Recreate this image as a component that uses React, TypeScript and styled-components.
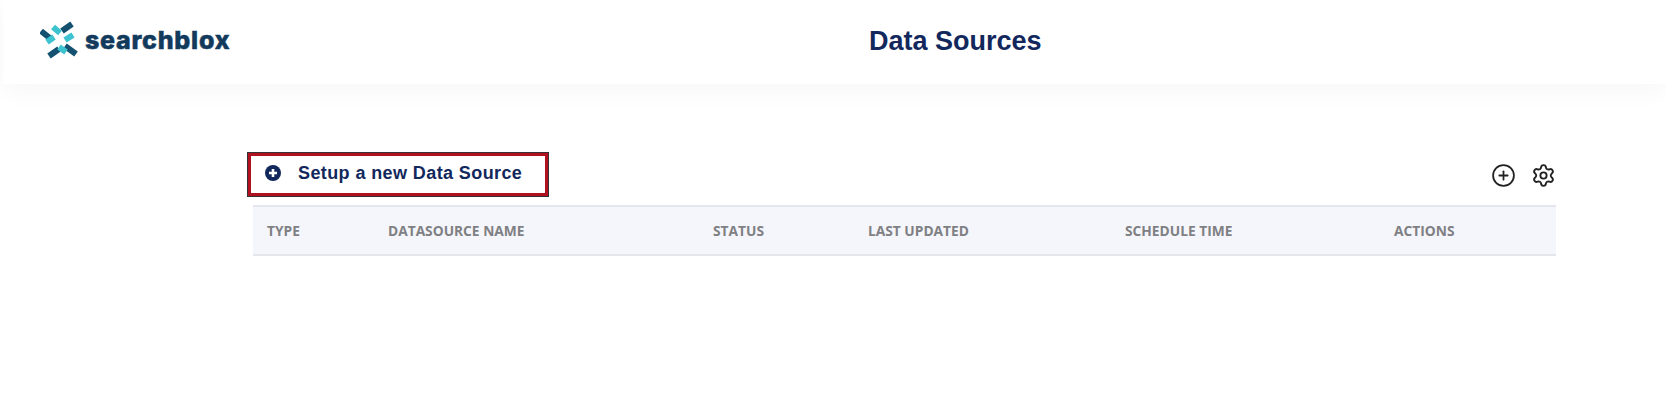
import React from 'react'
import styled, { createGlobalStyle } from 'styled-components'
import { CirclePlus, Settings } from 'lucide-react'

const GlobalStyle = createGlobalStyle`
  html, body {
    margin: 0;
    padding: 0;
    background: #fff;
  }
`

const Page = styled.div`
  width: 1666px;
  height: 409px;
  overflow: hidden;
  background: #fff;
`

const Header = styled.header`
  display: grid;
  grid-template-columns: 869px 1fr;
  align-items: center;
  height: 84px;
  padding-left: 40px;
  margin-left: 3px;
  background: #fff;
  box-shadow: 0 6px 24px rgba(0, 0, 0, 0.04);
`

const Brand = styled.div`
  display: flex;
  align-items: center;
  gap: 5px;
  margin-left: -3px;
  margin-top: -4px;
`

const BrandName = styled.span`
  font-family: Inter, sans-serif;
  font-size: 25px;
  font-weight: 800;
  letter-spacing: 0.75px;
  color: #123a5c;
  -webkit-text-stroke: 0.5px #123a5c;
`

const Title = styled.h1`
  margin: -2px 0 0 -43px;
  font-family: 'Liberation Sans', Arial, sans-serif;
  font-size: 27px;
  font-weight: 700;
  color: #12285c;
`

const Content = styled.main`
  padding: 69px 110px 0 253px;
`

const Toolbar = styled.div`
  display: flex;
  justify-content: space-between;
  align-items: center;
  height: 43px;
  margin-bottom: 9px;
`

const SetupBox = styled.div`
  display: flex;
  align-items: center;
  gap: 16px;
  width: 300px;
  height: 43px;
  box-sizing: border-box;
  margin-left: -5px;
  padding: 0 0 3px 14px;
  background: #fff;
  border: 3px solid #b0101f;
  outline: 1px solid #333;
`

const SetupDot = styled.svg`
  width: 16px;
  height: 16px;
  flex: none;
  margin-right: 1px;
`

const SetupLabel = styled.span`
  font-family: 'Liberation Sans', Arial, sans-serif;
  font-size: 18px;
  font-weight: 700;
  letter-spacing: 0.4px;
  color: #12285c;
`

const ToolIcons = styled.div`
  display: flex;
  align-items: center;
  gap: 15px;
  margin-top: 2px;
  color: #222;
`

const TableHead = styled.div`
  display: grid;
  grid-template-columns: 121px 325px 155px 257px 269px 1fr;
  align-items: center;
  height: 47px;
  padding-left: 14px;
  background: #f5f6fb;
  border-top: 2px solid #e4e6ec;
  border-bottom: 2px solid #e4e6ec;
`

const HeadCell = styled.div`
  font-family: 'Open Sans', sans-serif;
  font-size: 13.75px;
  font-weight: 700;
  color: #7f8084;
  margin-top: -1px;
`

const columns = ['TYPE', 'DATASOURCE NAME', 'STATUS', 'LAST UPDATED', 'SCHEDULE TIME', 'ACTIONS']

function LogoMark() {
  return (
    <svg width="40" height="38" viewBox="0 0 40 38">
      <g strokeWidth="6" fill="none">
        <path d="M1 10 L11 18" stroke="#14506f" />
        <path d="M22 10 L32 3" stroke="#14506f" />
        <path d="M25 25 L36 33" stroke="#14506f" />
        <path d="M9 35 L19 28" stroke="#14506f" />
        <path d="M13 6 L20 12" stroke="#3cc3cf" />
        <path d="M7 21 L14 16" stroke="#3cc3cf" />
        <path d="M25 19 L33 14" stroke="#3cc3cf" />
        <path d="M19 26 L26 31" stroke="#3cc3cf" />
      </g>
    </svg>
  )
}

export default function App() {
  return (
    <Page>
      <GlobalStyle />
      <Header>
        <Brand>
          <LogoMark />
          <BrandName>searchblox</BrandName>
        </Brand>
        <Title>Data Sources</Title>
      </Header>
      <Content>
        <Toolbar>
          <SetupBox>
            <SetupDot viewBox="0 0 16 16">
              <circle cx="8" cy="8" r="8" fill="#12285c" />
              <path d="M8 4v8M4 8h8" stroke="#fff" strokeWidth="2.6" />
            </SetupDot>
            <SetupLabel>Setup a new Data Source</SetupLabel>
          </SetupBox>
          <ToolIcons>
            <CirclePlus size={25} strokeWidth={1.7} />
            <Settings size={25} strokeWidth={1.8} />
          </ToolIcons>
        </Toolbar>
        <TableHead>
          {columns.map((name) => (
            <HeadCell key={name}>{name}</HeadCell>
          ))}
        </TableHead>
      </Content>
    </Page>
  )
}
